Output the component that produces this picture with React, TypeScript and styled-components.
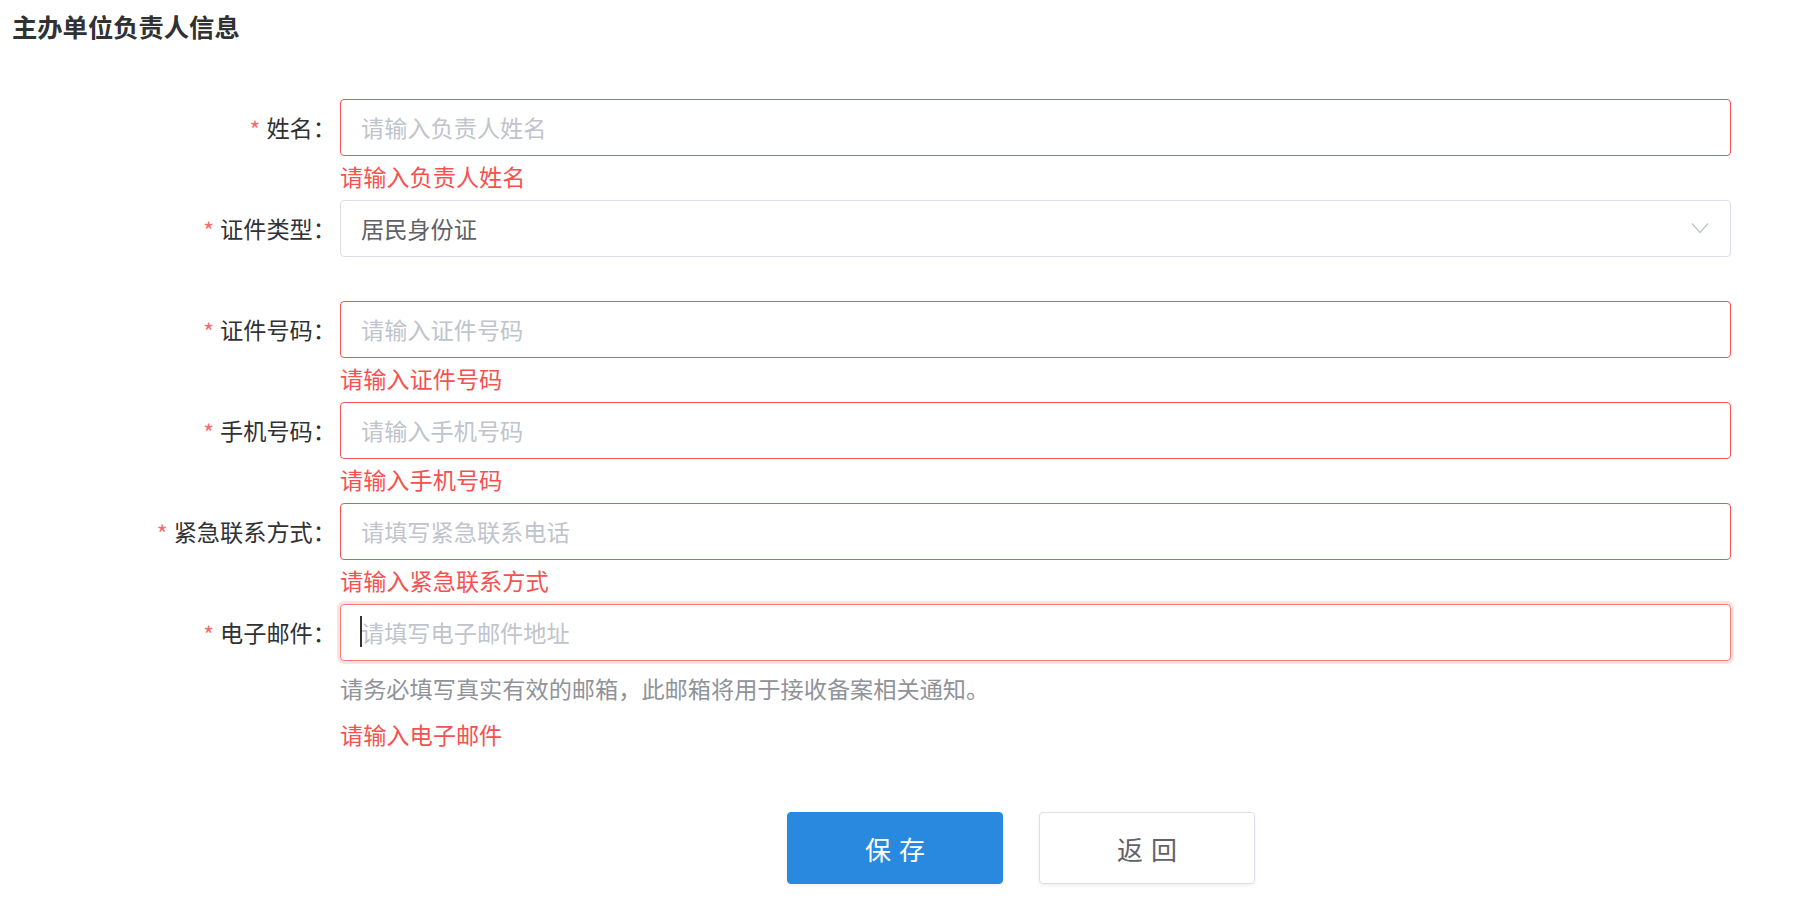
import * as React from 'react';
import styled, { createGlobalStyle, css } from 'styled-components';

const GlobalStyle = createGlobalStyle`
  body {
    margin: 0;
    background: #ffffff;
    font-family: "Noto Sans CJK SC", "Noto Sans", sans-serif;
  }
  * {
    box-sizing: border-box;
  }
`;

const ERROR = '#f65151';
const TEXT_SIZE = '23.2px';

const Page = styled.div`
  padding: 8px 65px 40px 12px;
`;

const Title = styled.h2`
  margin: 0;
  font-size: 25.3px;
  line-height: 36px;
  font-weight: 700;
  color: #303133;
`;

const Form = styled.form`
  margin-top: 55px;
`;

const FormItem = styled.div`
  display: grid;
  grid-template-columns: 328px 1fr;
`;

const Label = styled.label`
  height: 57px;
  line-height: 56px;
  padding-right: 4px;
  text-align: right;
  font-size: ${TEXT_SIZE};
  color: #303133;
  white-space: nowrap;
`;

const Star = styled.span`
  color: #f56c6c;
  margin-right: 6px;
  position: relative;
  top: 2px;
`;

const Control = styled.div`
  position: relative;
  min-width: 0;
`;

const fieldBox = css<{ $invalid?: boolean; $focused?: boolean }>`
  width: 100%;
  height: 57px;
  padding: 0 20px 1px;
  border: 1px solid ${p => (p.$invalid ? ERROR : '#dcdfe6')};
  border-radius: 4px;
  background: #ffffff;
  font-family: inherit;
  font-size: ${TEXT_SIZE};
  color: #606266;
  ${p =>
    p.$focused &&
    css`
      border-color: #f77b7b;
      box-shadow: 0 0 0 3px rgba(245, 108, 108, 0.2);
    `}
`;

const Field = styled.input<{ $invalid?: boolean; $focused?: boolean }>`
  ${fieldBox}
  display: block;
  outline: none;
  &::placeholder {
    color: #c0c4cc;
  }
`;

const SelectBox = styled.div`
  ${fieldBox}
  display: flex;
  align-items: center;
  justify-content: space-between;
  padding-right: 21px;
  cursor: pointer;
`;

const Caret = styled.span`
  position: absolute;
  left: 20px;
  top: 12px;
  width: 2px;
  height: 31px;
  background: #333333;
`;

const Message = styled.div`
  min-height: 44px;
  padding-top: 9px;
  line-height: 23px;
  font-size: ${TEXT_SIZE};
  color: ${ERROR};
`;

const Hint = styled.div`
  margin: 12px 0 11px;
  line-height: 30px;
  font-size: ${TEXT_SIZE};
  color: #909399;
`;

const ButtonRow = styled.div`
  display: flex;
  gap: 36px;
  margin-top: 54px;
  padding-left: 447px;
`;

const Button = styled.button<{ $primary?: boolean }>`
  width: 216px;
  height: 72px;
  border-radius: 4px;
  font-family: inherit;
  font-size: 26px;
  letter-spacing: 8px;
  text-indent: 8px;
  cursor: pointer;
  border: 1px solid ${p => (p.$primary ? '#2989de' : '#dcdfe6')};
  background: ${p => (p.$primary ? '#2989de' : '#ffffff')};
  color: ${p => (p.$primary ? '#ffffff' : '#606266')};
  box-shadow: 0 2px 4px rgba(0, 0, 0, 0.06);
`;

const Chevron = () => (
  <svg width="18" height="12" viewBox="0 0 18 12" fill="none">
    <path d="M1 1.5 L9 10.5 L17 1.5" stroke="#c0c4cc" strokeWidth="1.4" />
  </svg>
);

type Row = {
  label: string;
  placeholder: string;
  error: string;
};

const rows: Row[] = [
  { label: '证件号码', placeholder: '请输入证件号码', error: '请输入证件号码' },
  { label: '手机号码', placeholder: '请输入手机号码', error: '请输入手机号码' },
  { label: '紧急联系方式', placeholder: '请填写紧急联系电话', error: '请输入紧急联系方式' },
];

const RequiredLabel: React.FC<{ text: string }> = ({ text }) => (
  <Label>
    <Star>*</Star>
    {text}：
  </Label>
);

const App: React.FC = () => (
  <Page>
    <GlobalStyle />
    <Title>主办单位负责人信息</Title>
    <Form onSubmit={e => e.preventDefault()}>
      <FormItem>
        <RequiredLabel text="姓名" />
        <Control>
          <Field $invalid placeholder="请输入负责人姓名" />
          <Message>请输入负责人姓名</Message>
        </Control>
      </FormItem>

      <FormItem>
        <RequiredLabel text="证件类型" />
        <Control>
          <SelectBox>
            <span>居民身份证</span>
            <Chevron />
          </SelectBox>
          <Message />
        </Control>
      </FormItem>

      {rows.map(r => (
        <FormItem key={r.label}>
          <RequiredLabel text={r.label} />
          <Control>
            <Field $invalid placeholder={r.placeholder} />
            <Message>{r.error}</Message>
          </Control>
        </FormItem>
      ))}

      <FormItem>
        <RequiredLabel text="电子邮件" />
        <Control>
          <Field $invalid $focused placeholder="请填写电子邮件地址" />
          <Caret />
          <Hint>请务必填写真实有效的邮箱，此邮箱将用于接收备案相关通知。</Hint>
          <Message>请输入电子邮件</Message>
        </Control>
      </FormItem>

      <FormItem>
        <span />
        <ButtonRow>
          <Button type="submit" $primary>保存</Button>
          <Button type="button">返回</Button>
        </ButtonRow>
      </FormItem>
    </Form>
  </Page>
);

export default App;
